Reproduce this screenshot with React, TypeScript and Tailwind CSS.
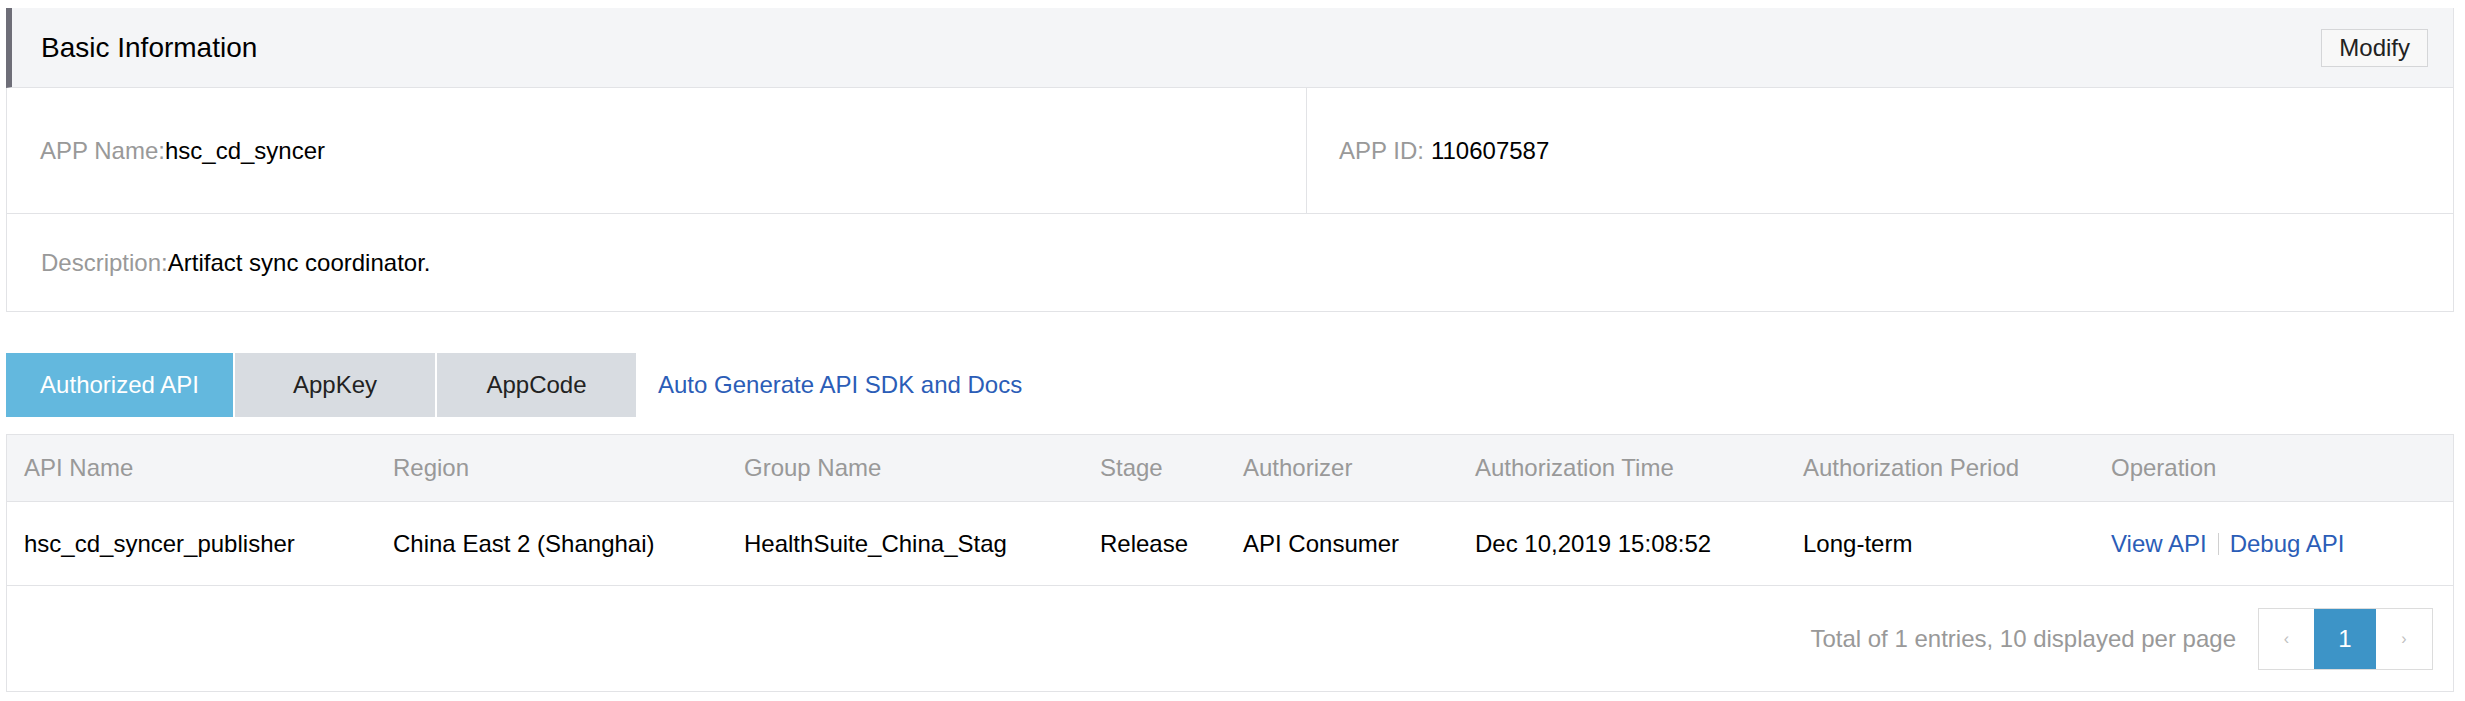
import React from "react";

const columns = [
  { title: "API Name", width: "w-[369px]" },
  { title: "Region", width: "w-[351px]" },
  { title: "Group Name", width: "w-[356px]" },
  { title: "Stage", width: "w-[143px]" },
  { title: "Authorizer", width: "w-[232px]" },
  { title: "Authorization Time", width: "w-[328px]" },
  { title: "Authorization Period", width: "w-[308px]" },
  { title: "Operation", width: "flex-1" },
];

const row = [
  "hsc_cd_syncer_publisher",
  "China East 2 (Shanghai)",
  "HealthSuite_China_Stag",
  "Release",
  "API Consumer",
  "Dec 10,2019 15:08:52",
  "Long-term",
];

const App: React.FC = () => {
  return (
    <div className="w-full h-[701px] bg-white pl-[6px] pr-[11px] pt-[8px] font-['Liberation_Sans',Arial,sans-serif] text-[24px] text-black">
      {/* Basic information */}
      <div className="border border-l-0 border-t-0 border-[#e2e3e6]">
        <div className="h-[80px] bg-[#f4f5f7] border-l-[6px] border-[#6e6e78] border-b border-b-[#e2e3e6] flex items-center justify-between pl-[29px] pr-[25px]">
          <h2 className="text-[28px] text-black">Basic Information</h2>
          <button className="h-[38px] px-[17px] bg-[#f8f8f8] border border-[#d5d6d8] text-[24px] text-[#222] leading-none">
            Modify
          </button>
        </div>
        <div className="flex h-[126px] border-l border-[#e2e3e6] border-b">
          <div className="w-[1300px] flex items-center pl-[33px] border-r border-[#e2e3e6]">
            <span className="text-[#999]">APP Name:</span>
            <span>hsc_cd_syncer</span>
          </div>
          <div className="flex-1 flex items-center pl-[32px]">
            <span className="text-[#999]">APP ID:</span>
            <span className="ml-[7px]">110607587</span>
          </div>
        </div>
        <div className="h-[97px] flex items-center pl-[34px] border-l border-[#e2e3e6]">
          <span className="text-[#999]">Description:</span>
          <span>Artifact sync coordinator.</span>
        </div>
      </div>

      {/* Tabs */}
      <div className="mt-[41px] flex items-center h-[64px]">
        <div className="w-[227px] h-full bg-[#63b8de] text-white flex items-center justify-center">
          Authorized API
        </div>
        <div className="w-[200px] h-full ml-[2px] bg-[#d8dce1] text-[#222] flex items-center justify-center">
          AppKey
        </div>
        <div className="w-[199px] h-full ml-[2px] bg-[#d8dce1] text-[#222] flex items-center justify-center">
          AppCode
        </div>
        <a className="ml-[22px] text-[#2b5db7]">Auto Generate API SDK and Docs</a>
      </div>

      {/* Table */}
      <div className="mt-[17px] border border-[#e2e3e6]">
        <div className="h-[67px] bg-[#f4f5f7] flex items-center pl-[17px] border-b border-[#e2e3e6] text-[#999]">
          {columns.map((c) => (
            <div key={c.title} className={c.width}>
              {c.title}
            </div>
          ))}
        </div>
        <div className="h-[84px] flex items-center pl-[17px] border-b border-[#e2e3e6]">
          {row.map((v, i) => (
            <div key={v} className={columns[i].width}>
              {v}
            </div>
          ))}
          <div className="flex-1 flex items-center text-[#2b5db7]">
            <a>View API</a>
            <span className="mx-[11px] w-px h-[22px] bg-[#d0d0d0]" />
            <a>Debug API</a>
          </div>
        </div>
        <div className="h-[105px] flex items-center justify-end pr-[20px]">
          <span className="text-[#999] mr-[22px]">Total of 1 entries, 10 displayed per page</span>
          <div className="flex h-[62px] border border-[#dcdcdc]">
            <div className="w-[55px] flex items-center justify-center text-[16px] text-[#c0c0c0]">‹</div>
            <div className="w-[62px] flex items-center justify-center bg-[#3d94c7] text-white">1</div>
            <div className="w-[56px] flex items-center justify-center text-[16px] text-[#c0c0c0]">›</div>
          </div>
        </div>
      </div>
    </div>
  );
};

export default App;
